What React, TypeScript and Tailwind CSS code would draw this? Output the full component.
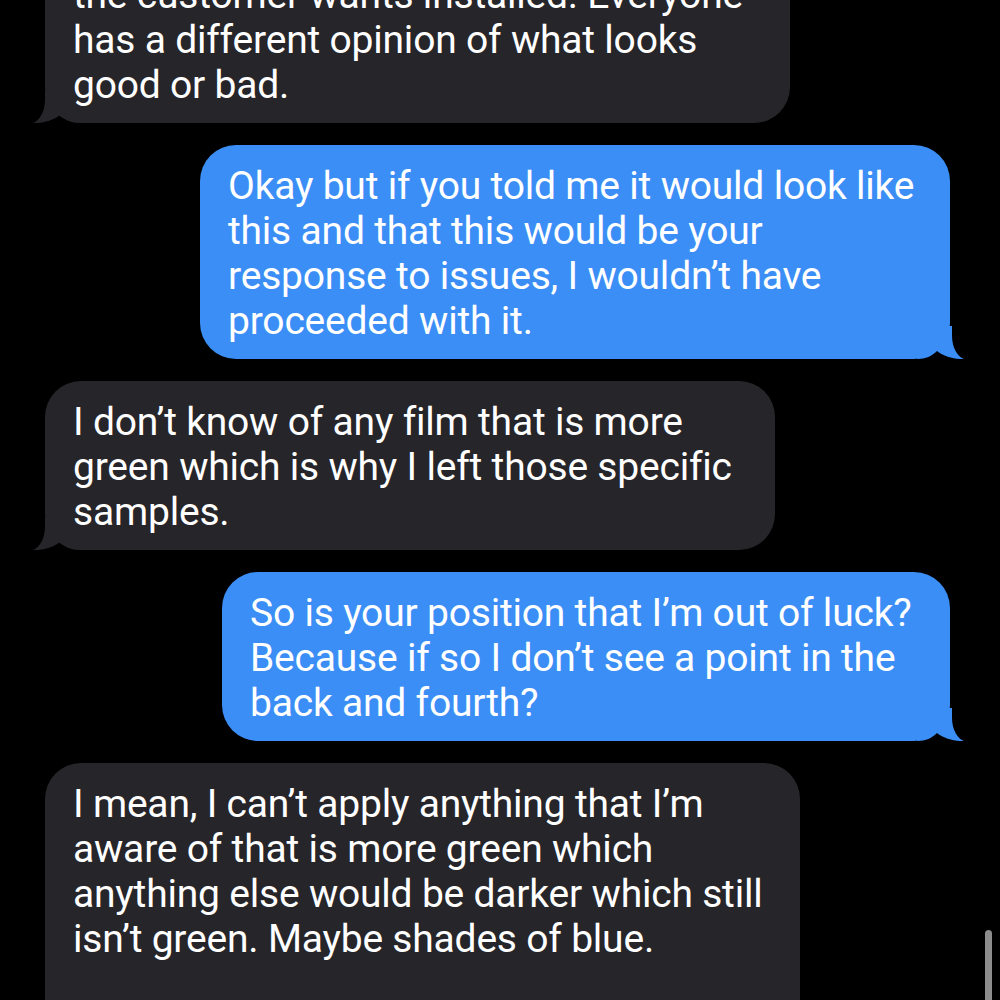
import React from "react";

const Tail = ({ color, side }: { color: string; side: "left" | "right" }) => (
  <svg
    width="47"
    height="33"
    viewBox="0 0 47 33"
    className={
      side === "left"
        ? "absolute bottom-0 left-[-12px]"
        : "absolute bottom-0 right-[-14px] scale-x-[-1]"
    }
  >
    <path
      d="M12 0 L12 10 C12 22 6 31 0 33 C8 33.5 20 31 27 25 C32 30 38 33 47 33 L47 0 Z"
      fill={color}
    />
  </svg>
);

const Bubble = ({
  lines,
  mine,
  width,
  className = "",
  extra = false,
}: {
  lines: string[];
  mine?: boolean;
  width: string;
  className?: string;
  extra?: boolean;
}) => {
  const color = mine ? "#3b8ef6" : "#262529";
  return (
    <div
      className={`relative ${width} ${className} ${
        mine ? "self-end bg-[#3b8ef6]" : "self-start bg-[#262529]"
      } rounded-[36px] pt-[19px] ${extra ? "pb-[80px]" : "pb-[15px]"} pl-[28px] pr-[20px]`}
    >
      <div className="relative z-10 text-white text-[39px] leading-[45px] tracking-[-0.2px] font-['Roboto','Liberation_Sans',sans-serif] whitespace-nowrap">
        {lines.map((l, i) => (
          <div key={i}>{l}</div>
        ))}
      </div>
      <Tail color={color} side={mine ? "right" : "left"} />
    </div>
  );
};

export default function App() {
  return (
    <div className="relative w-[1000px] h-[1000px] overflow-hidden bg-black">
      <div className="flex flex-col gap-[22px] pl-[45px] pr-[50px] mt-[-46px]">
        <Bubble
          width="w-[745px]"
          lines={[
            "the customer wants installed. Everyone",
            "has a different opinion of what looks",
            "good or bad.",
          ]}
        />
        <Bubble
          mine
          width="w-[750px]"
          lines={[
            "Okay but if you told me it would look like",
            "this and that this would be your",
            "response to issues, I wouldn\u2019t have",
            "proceeded with it.",
          ]}
        />
        <Bubble
          width="w-[730px]"
          lines={[
            "I don\u2019t know of any film that is more",
            "green which is why I left those specific",
            "samples.",
          ]}
        />
        <Bubble
          mine
          width="w-[728px]"
          lines={[
            "So is your position that I\u2019m out of luck?",
            "Because if so I don\u2019t see a point in the",
            "back and fourth?",
          ]}
        />
        <Bubble
          width="w-[755px]"
          extra
          lines={[
            "I mean, I can\u2019t apply anything that I\u2019m",
            "aware of that is more green which",
            "anything else would be darker which still",
            "isn\u2019t green. Maybe shades of blue.",
          ]}
        />
      </div>
      <div className="absolute left-[985px] top-[930px] w-[7px] h-[90px] rounded-full bg-[#8c8c8c]" />
    </div>
  );
}
